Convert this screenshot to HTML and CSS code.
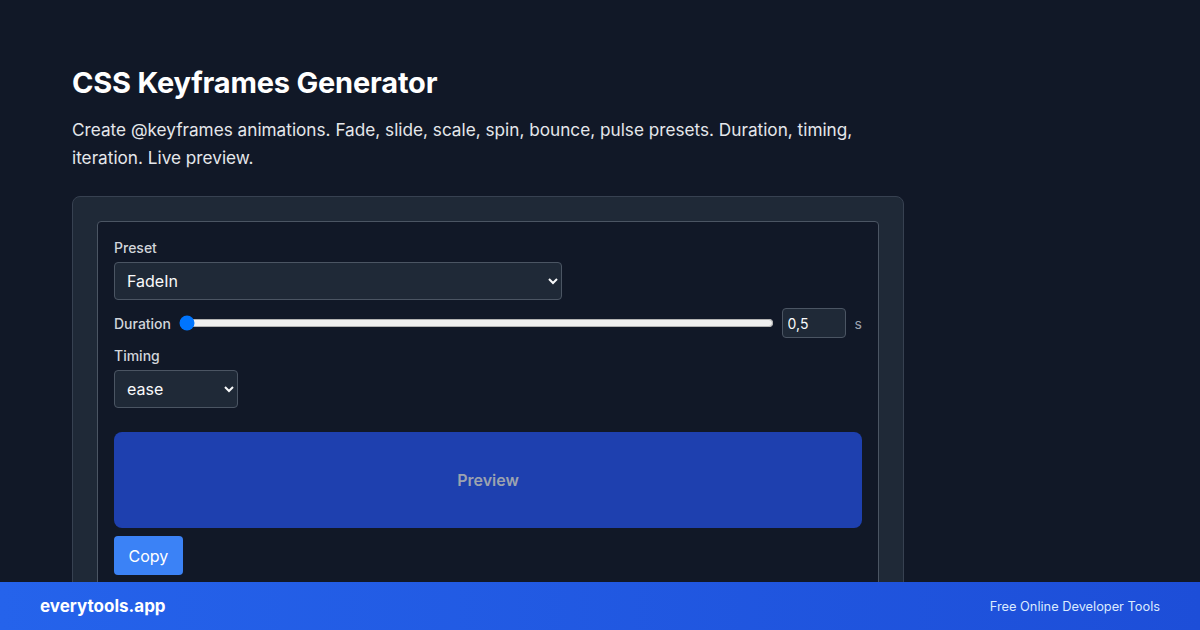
FILE: index.html
```html
<!DOCTYPE html>
<html lang="en">
<head>
    <meta charset="UTF-8">
    <meta name="viewport" content="width=device-width, initial-scale=1.0">
    <title>CSS Keyframes Generator</title>
    <link rel="stylesheet" href="styles.css">
</head>
<body>
    <main class="page">
        <h1>CSS Keyframes Generator</h1>
        <p class="lead">Create @keyframes animations. Fade, slide, scale, spin, bounce, pulse presets. Duration, timing, iteration. Live preview.</p>

        <div class="tool-card">
            <div class="tool-inner">
                <label class="field-label" for="preset">Preset</label>
                <select id="preset" class="preset-select">
                    <option>FadeIn</option>
                    <option>FadeOut</option>
                    <option>SlideIn</option>
                    <option>ScaleUp</option>
                    <option>Spin</option>
                    <option>Bounce</option>
                    <option>Pulse</option>
                </select>

                <div class="duration-row">
                    <label class="field-label inline" for="duration">Duration</label>
                    <input type="range" id="duration" min="0.5" max="5" step="0.1" value="0.5">
                    <input type="text" id="duration-val" class="num-input" value="0,5">
                    <span class="unit">s</span>
                </div>

                <label class="field-label" for="timing">Timing</label>
                <select id="timing" class="timing-select">
                    <option>ease</option>
                    <option>linear</option>
                    <option>ease-in</option>
                    <option>ease-out</option>
                    <option>ease-in-out</option>
                </select>

                <div class="preview-box">Preview</div>
                <button class="copy-btn">Copy</button>
            </div>
        </div>
    </main>

    <footer class="site-footer">
        <span class="brand">everytools.app</span>
        <span class="tagline">Free Online Developer Tools</span>
    </footer>
</body>
</html>
```

FILE: styles.css
```css
body {
    margin: 0;
    background-color: #111827;
    color: #f3f4f6;
    font-family: Inter, "Noto Sans", Arial, sans-serif;
    height: 630px;
    overflow: hidden;
}
.page {
    padding: 65px 72px 0;
    width: 832px;
}
h1 {
    margin: 0 0 16px;
    font-size: 29px;
    font-weight: 700;
    color: #ffffff;
    letter-spacing: -0.2px;
}
.lead {
    margin: 0 0 24px;
    font-size: 17.2px;
    line-height: 28px;
    color: #e5e7eb;
    width: 800px;
}
.tool-card {
    background-color: #1f2937;
    border: 1px solid #374151;
    border-radius: 8px;
    padding: 24px;
}
.tool-inner {
    background-color: #111827;
    border: 1px solid #4b5563;
    border-radius: 4px;
    padding: 17px 16px 24px;
    display: flex;
    flex-direction: column;
    align-items: flex-start;
}
.field-label {
    font-size: 14px;
    font-weight: 500;
    color: #d1d5db;
    margin-bottom: 6px;
}
.field-label.inline {
    margin-bottom: 0;
}
select {
    color-scheme: dark;
    background-color: #1f2937;
    color: #f9fafb;
    border: 1px solid #4b5563;
    border-radius: 4px;
    font-family: inherit;
    font-size: 16px;
    height: 38px;
    padding: 0 8px;
}
.preset-select {
    width: 448px;
}
.timing-select {
    width: 124px;
}
.duration-row {
    display: flex;
    align-items: center;
    gap: 8px;
    width: 100%;
    margin: 8px 0 9px;
}
.duration-row input[type="range"] {
    flex: 1;
    margin: 0;
}
.num-input {
    width: 64px;
    height: 30px;
    box-sizing: border-box;
    background-color: #1f2937;
    color: #f9fafb;
    border: 1px solid #4b5563;
    border-radius: 4px;
    font-family: inherit;
    font-size: 14px;
    padding: 0 5px;
}
.unit {
    font-size: 14px;
    color: #9ca3af;
    margin-left: 1px;
}
.preview-box {
    margin-top: 24px;
    width: 100%;
    height: 96px;
    background-color: #1e40af;
    border-radius: 8px;
    display: flex;
    align-items: center;
    justify-content: center;
    color: #9ca3af;
    font-weight: 600;
    font-size: 16px;
}
.copy-btn {
    margin-top: 8px;
    background-color: #3b82f6;
    color: #ffffff;
    border: none;
    border-radius: 4px;
    font-family: inherit;
    font-size: 16px;
    padding: 0 14.5px;
    height: 39px;
    cursor: pointer;
}
.site-footer {
    position: fixed;
    left: 0;
    right: 0;
    bottom: 0;
    height: 48px;
    padding: 0 40px;
    display: flex;
    align-items: center;
    justify-content: space-between;
    background: linear-gradient(90deg, #2563eb, #1d4ed8);
}
.brand {
    font-size: 17px;
    font-weight: 700;
    color: #ffffff;
}
.tagline {
    font-size: 12.8px;
    color: #dbeafe;
}
```
